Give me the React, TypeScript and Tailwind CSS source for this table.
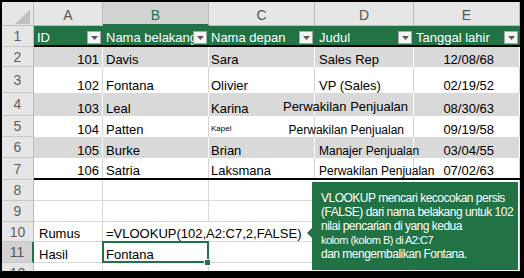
import React from "react";

const GREEN = "#217346";

function RowNum({ n, h, active }: { n: string; h: string; active?: boolean }) {
  return (
    <div
      className={`${h} w-[32px] shrink-0 flex items-center justify-center border-b border-b-[#c8c8c8] text-[14px] leading-none ${
        active
          ? "bg-[#d2d2d2] border-r-2 border-r-[#217346] text-[#555]"
          : "bg-[#e6e6e6] border-r border-r-[#bcbcbc] text-[#5f5f5f]"
      }`}
    >
      {n}
    </div>
  );
}

function Drop() {
  return (
    <div className="mb-[1px] mr-[2px] w-[14px] h-[13px] shrink-0 bg-[#f4f4f4] border border-[#a8a8a8] flex items-center justify-center">
      <svg width="7" height="4" viewBox="0 0 7 4">
        <path d="M0 0h7L3.5 4z" fill="#5a5a5a" />
      </svg>
    </div>
  );
}

function HeadCell({ w, pl, label }: { w: string; pl: string; label: string }) {
  return (
    <div className={`${w} shrink-0 flex items-end`}>
      <span className={`flex-1 min-w-0 overflow-hidden whitespace-nowrap leading-[14px] ${pl}`}>{label}</span>
      <Drop />
    </div>
  );
}

function Cell({
  w,
  line,
  className = "",
  children,
}: {
  w: string;
  line: string;
  className?: string;
  children?: React.ReactNode;
}) {
  return (
    <div className={`${w} shrink-0 flex items-end whitespace-nowrap leading-[14px] ${line} ${className}`}>
      {children}
    </div>
  );
}

type Person = {
  n: string;
  h: string;
  band: boolean;
  id: string;
  last: string;
  first: React.ReactNode;
  title: React.ReactNode;
  titleCls: string;
  date: string;
  thick?: boolean;
};

const people: Person[] = [
  { n: "2", h: "h-[20px]", band: true, id: "101", last: "Davis", first: "Sara", title: "Sales Rep", titleCls: "pl-[4px]", date: "12/08/68" },
  { n: "3", h: "h-[26px]", band: false, id: "102", last: "Fontana", first: "Olivier", title: "VP (Sales)", titleCls: "pl-[4px]", date: "02/19/52" },
  {
    n: "4",
    h: "h-[23px]",
    band: true,
    id: "103",
    last: "Leal",
    first: "Karina",
    title: <span className="pb-[2px]">Perwakilan Penjualan</span>,
    titleCls: "justify-end pr-[5px]",
    date: "08/30/63",
  },
  {
    n: "5",
    h: "h-[21px]",
    band: false,
    id: "104",
    last: "Patten",
    first: <span className="text-[8px] leading-[8px] pb-[4px]">Kapel</span>,
    title: <span className="text-[12px]">Perwakilan Penjualan</span>,
    titleCls: "justify-end pr-[9px]",
    date: "09/19/58",
  },
  {
    n: "6",
    h: "h-[21px]",
    band: true,
    id: "105",
    last: "Burke",
    first: "Brian",
    title: <span className="text-[12px]">Manajer Penjualan</span>,
    titleCls: "pl-[4px]",
    date: "03/04/55",
  },
  {
    n: "7",
    h: "h-[22px]",
    band: false,
    id: "106",
    last: "Satria",
    first: "Laksmana",
    title: <span className="text-[12px]">Perwakilan Penjualan</span>,
    titleCls: "pl-[4px]",
    date: "07/02/63",
    thick: true,
  },
];

export default function App() {
  return (
    <div className="w-[524px] h-[278px] bg-black pt-[2px] pl-[2px] pr-[4px] pb-[7px] font-['Liberation_Sans',Arial,sans-serif] text-[13px] text-black">
      <div className="relative h-[269px] bg-white overflow-hidden">
        {/* column letters */}
        <div className="flex h-[24px] bg-[#e6e6e6] text-[14px] leading-[16px] text-[#555]">
          <div className="w-[32px] shrink-0 border-r border-b border-[#bcbcbc] relative">
            <svg className="absolute left-[13px] top-[8px]" width="15" height="14" viewBox="0 0 15 14">
              <path d="M15 0v14H0z" fill="#bfbfbf" />
            </svg>
          </div>
          <div className="w-[69px] shrink-0 flex items-end justify-center pb-[2px] border-r border-b border-[#bcbcbc]">A</div>
          <div className="w-[106px] shrink-0 flex items-end justify-center pb-[1px] bg-[#d2d2d2] border-r border-r-[#bcbcbc] border-b-2 border-b-[#217346] text-[#217346]">
            B
          </div>
          <div className="w-[106px] shrink-0 flex items-end justify-center pb-[2px] border-r border-b border-[#bcbcbc]">C</div>
          <div className="w-[99px] shrink-0 flex items-end justify-center pb-[2px] border-r border-b border-[#bcbcbc]">D</div>
          <div className="w-[106px] shrink-0 flex items-end justify-center pb-[2px] border-r border-b border-[#bcbcbc]">E</div>
        </div>

        {/* table header */}
        <div className="flex h-[21px]">
          <RowNum n="1" h="h-[21px]" />
          <div className="flex bg-[#217346] border-b-2 border-black text-white">
            <HeadCell w="w-[69px]" pl="pl-[3px]" label="ID" />
            <HeadCell w="w-[106px]" pl="pl-[3px]" label="Nama belakang" />
            <HeadCell w="w-[106px]" pl="pl-[2px]" label="Nama depan" />
            <HeadCell w="w-[99px]" pl="pl-[4px]" label="Judul" />
            <HeadCell w="w-[106px]" pl="pl-[2px]" label="Tanggal lahir" />
          </div>
        </div>

        {/* table rows */}
        {people.map((p) => {
          const line = p.band ? "border-r border-r-white" : "border-r border-r-[#d4d4d4]";
          return (
            <div key={p.n} className={`flex ${p.h}`}>
              <RowNum n={p.n} h={p.h} />
              <div className={`flex ${p.band ? "bg-[#d9d9d9]" : "bg-white"} ${p.thick ? "border-b-2 border-black" : ""}`}>
                <Cell w="w-[69px]" line={line} className="justify-end pr-[3px]">
                  {p.id}
                </Cell>
                <Cell w="w-[106px]" line={line} className="pl-[3px]">
                  {p.last}
                </Cell>
                <Cell w="w-[106px]" line={line} className="pl-[2px]">
                  {p.first}
                </Cell>
                <Cell w="w-[99px]" line={line} className={p.titleCls}>
                  {p.title}
                </Cell>
                <Cell w="w-[106px]" line={line} className="justify-end pr-[25px]">
                  {p.date}
                </Cell>
              </div>
            </div>
          );
        })}

        {/* empty + formula rows */}
        {["8", "9"].map((n) => (
          <div key={n} className="flex h-[21px]">
            <RowNum n={n} h="h-[21px]" />
            <Cell w="w-[69px]" line="border-r border-b border-[#d9d9d9]" />
            <Cell w="w-[106px]" line="border-r border-b border-[#d9d9d9]" />
            <Cell w="w-[106px]" line="border-r border-b border-[#d9d9d9]" />
            <Cell w="w-[99px]" line="border-r border-b border-[#d9d9d9]" />
            <Cell w="w-[106px]" line="border-r border-b border-[#d9d9d9]" />
          </div>
        ))}

        <div className="flex h-[20px]">
          <RowNum n="10" h="h-[20px]" />
          <Cell w="w-[69px]" line="border-r border-b border-[#d9d9d9]" className="pl-[5px]">
            Rumus
          </Cell>
          <Cell w="w-[106px]" line="border-b border-[#d9d9d9]" className="pl-[3px]">
            =VLOOKUP(102,A2:C7,2,FALSE)
          </Cell>
          <Cell w="w-[106px]" line="border-r border-b border-[#d9d9d9]" />
          <Cell w="w-[99px]" line="border-r border-b border-[#d9d9d9]" />
          <Cell w="w-[106px]" line="border-r border-b border-[#d9d9d9]" />
        </div>

        <div className="flex h-[21px]">
          <RowNum n="11" h="h-[21px]" active />
          <Cell w="w-[69px]" line="border-r border-b border-[#d9d9d9]" className="pl-[5px]">
            Hasil
          </Cell>
          <Cell w="w-[106px]" line="border-r border-b border-[#d9d9d9]" className="pl-[3px] relative">
            Fontana
            <div className="absolute -left-[1px] -top-[1px] -right-[1px] -bottom-[1px] border-2 border-[#217346]" />
            <div className="absolute -right-[3px] -bottom-[4px] w-[7px] h-[7px] bg-[#217346] border border-white" />
          </Cell>
          <Cell w="w-[106px]" line="border-r border-b border-[#d9d9d9]" />
          <Cell w="w-[99px]" line="border-r border-b border-[#d9d9d9]" />
          <Cell w="w-[106px]" line="border-r border-b border-[#d9d9d9]" />
        </div>

        <div className="flex h-[8px] overflow-hidden">
          <div className="h-[8px] w-[32px] shrink-0 bg-[#e6e6e6] border-r border-r-[#bcbcbc] overflow-hidden text-[14px] leading-none text-[#5f5f5f] text-center pt-[3px]">
            12
          </div>
          <Cell w="w-[69px]" line="border-r border-[#d9d9d9]" />
          <Cell w="w-[106px]" line="border-r border-[#d9d9d9]" />
          <Cell w="w-[106px]" line="border-r border-[#d9d9d9]" />
          <Cell w="w-[99px]" line="border-r border-[#d9d9d9]" />
          <Cell w="w-[106px]" line="border-r border-[#d9d9d9]" />
        </div>

        {/* callout */}
        <div
          className="absolute left-[310px] top-[180px] w-[206px] h-[88px] pl-[9px] pt-[9px] text-white text-[12px] leading-[14px] tracking-[-0.5px]"
          style={{ backgroundColor: GREEN }}
        >
          <div className="absolute -left-[5px] top-[46px] w-0 h-0 border-y-[5px] border-y-transparent border-r-[5px] border-r-[#217346]" />
          <div>VLOOKUP mencari kecocokan persis</div>
          <div>(FALSE) dari nama belakang untuk 102</div>
          <div>nilai pencarian di yang kedua</div>
          <div className="text-[11px]">kolom (kolom B) di A2:C7</div>
          <div>dan mengembalikan Fontana.</div>
        </div>
      </div>
    </div>
  );
}
